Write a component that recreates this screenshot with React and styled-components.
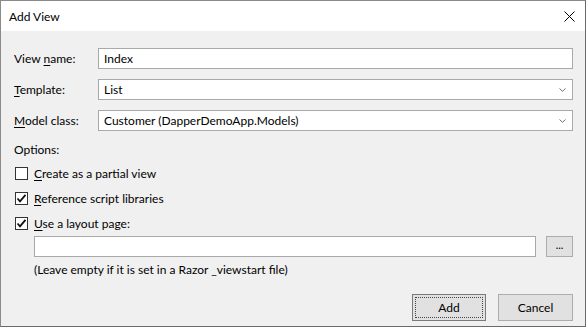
import React, { useState } from "react";
import styled, { createGlobalStyle } from "styled-components";

const Global = createGlobalStyle`
  html, body {
    margin: 0;
    padding: 0;
    background: #ffffff;
  }
  body {
    font-family: "Segoe UI", "Lato", "Noto Sans", sans-serif;
    font-size: 12px;
    color: #000000;
  }
`;

const Window = styled.div`
  width: 586px;
  height: 327px;
  box-sizing: border-box;
  border: 1px solid #8a8a8a;
  border-right-color: #6a6a6a;
  border-bottom-color: #6a6a6a;
  display: flex;
  flex-direction: column;
  background: #f0f0f0;
  overflow: hidden;
`;

const TitleBar = styled.div`
  flex-shrink: 0;
  height: 30px;
  background: #ffffff;
  display: flex;
  align-items: center;
  justify-content: space-between;
  padding-left: 8px;
  padding-right: 9px;
`;

const Title = styled.span`
  font-size: 12px;
  color: #000000;
`;

const Close = styled.button`
  width: 14px;
  height: 14px;
  border: none;
  background: none;
  padding: 0;
  display: flex;
  align-items: center;
  justify-content: center;
`;

const Body = styled.div`
  flex: 1;
  padding: 17px 12px 0 12px;
  display: flex;
  flex-direction: column;
`;

const FieldRow = styled.div`
  display: grid;
  grid-template-columns: 85px 1fr;
  align-items: center;
  height: 21px;
  margin-bottom: 10px;
`;

const Label = styled.label`
  padding-left: 1px;
  white-space: nowrap;
`;

const Key = styled.span`
  text-decoration: underline;
  text-underline-offset: 2px;
`;

const TextBox = styled.div`
  height: 21px;
  box-sizing: border-box;
  border: 1px solid #a9a9a9;
  background: #ffffff;
  display: flex;
  align-items: center;
  padding-left: 5px;
  width: ${(p) => p.$width || "auto"};
`;

const Select = styled(TextBox)`
  justify-content: space-between;
  padding-right: 6px;
`;

const Section = styled.div`
  padding-left: 1px;
  height: 16px;
  display: flex;
  align-items: center;
`;

const Options = styled.div`
  margin-top: 10px;
  display: flex;
  flex-direction: column;
  gap: 12px;
`;

const CheckRow = styled.label`
  display: flex;
  align-items: center;
  gap: 6px;
  height: 13px;
  padding-left: 2px;
`;

const Box = styled.span`
  width: 13px;
  height: 13px;
  box-sizing: border-box;
  border: 1px solid #333333;
  background: #ffffff;
  display: flex;
  align-items: center;
  justify-content: center;
`;

const Indented = styled.div`
  padding-left: 21px;
  display: flex;
  flex-direction: column;
`;

const PathRow = styled.div`
  margin-top: 6px;
  display: flex;
  align-items: center;
  gap: 10px;
`;

const SmallButton = styled.button`
  width: 27px;
  height: 21px;
  box-sizing: border-box;
  border: 1px solid #adadad;
  background: #e1e1e1;
  font-family: inherit;
  font-size: 11px;
  padding: 0 0 4px 0;
  line-height: 1;
`;

const Note = styled.div`
  margin-top: 4px;
  height: 16px;
  display: flex;
  align-items: center;
`;

const Footer = styled.div`
  margin-top: 17px;
  display: flex;
  justify-content: flex-end;
  gap: 12px;
`;

const Button = styled.button`
  width: ${(p) => (p.$wide ? "75px" : "74px")};
  height: 27px;
  box-sizing: border-box;
  border: 1px solid ${(p) => (p.$default ? "#7a7a7a" : "#adadad")};
  background: #e1e1e1;
  font-family: inherit;
  font-size: 12px;
  color: #000000;
  padding: 0;
  position: relative;

  ${(p) =>
    p.$default &&
    `
    &::after {
      content: "";
      position: absolute;
      inset: 2px;
      border: 1px dotted #444444;
    }
  `}
`;

const Chevron = () => (
  <svg width="7" height="4" viewBox="0 0 7 4">
    <path d="M0.5 0.5 L3.5 3.3 L6.5 0.5" fill="none" stroke="#707070" strokeWidth="1" />
  </svg>
);

const Check = () => (
  <svg width="11" height="11" viewBox="0 0 11 11">
    <path d="M1.5 5.5 L4 8.3 L9.5 1.8" fill="none" stroke="#111111" strokeWidth="1.8" />
  </svg>
);

const CheckBox = ({ checked, children }) => (
  <CheckRow>
    <Box>{checked && <Check />}</Box>
    <span>{children}</span>
  </CheckRow>
);

const App = () => {
  const [viewName] = useState("Index");

  return (
    <>
      <Global />
      <Window>
        <TitleBar>
          <Title>Add View</Title>
          <Close>
            <svg width="11" height="11" viewBox="0 0 11 11">
              <path d="M0.5 0.5 L10.5 10.5 M10.5 0.5 L0.5 10.5" stroke="#000" strokeWidth="1" />
            </svg>
          </Close>
        </TitleBar>

        <Body>
          <FieldRow>
            <Label>
              View <Key>n</Key>ame:
            </Label>
            <TextBox>{viewName}</TextBox>
          </FieldRow>
          <FieldRow>
            <Label>
              <Key>T</Key>emplate:
            </Label>
            <Select>
              <span>List</span>
              <Chevron />
            </Select>
          </FieldRow>
          <FieldRow>
            <Label>
              <Key>M</Key>odel class:
            </Label>
            <Select>
              <span>Customer (DapperDemoApp.Models)</span>
              <Chevron />
            </Select>
          </FieldRow>

          <Section>Options:</Section>

          <Options>
            <CheckBox>
              <Key>C</Key>reate as a partial view
            </CheckBox>
            <CheckBox checked>
              <Key>R</Key>eference script libraries
            </CheckBox>
            <CheckBox checked>
              <Key>U</Key>se a layout page:
            </CheckBox>
          </Options>

          <Indented>
            <PathRow>
              <TextBox $width="503px" />
              <SmallButton>...</SmallButton>
            </PathRow>
            <Note>(Leave empty if it is set in a Razor _viewstart file)</Note>
          </Indented>

          <Footer>
            <Button $default>Add</Button>
            <Button $wide>Cancel</Button>
          </Footer>
        </Body>
      </Window>
    </>
  );
};

export default App;
